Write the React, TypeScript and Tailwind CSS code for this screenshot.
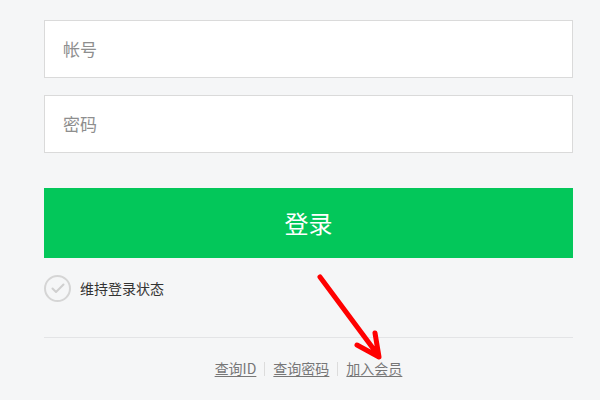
export default function App() {
  return (
    <div
      className="relative h-[400px] w-[600px] overflow-hidden bg-[#f5f6f7]"
      style={{ fontFamily: '"Noto Sans CJK SC", "Liberation Sans", sans-serif' }}
    >
      <div className="ml-[44px] w-[529px] pt-[20px]">
        <div className="flex h-[58px] items-center border border-[#dadada] bg-white pl-[18px] text-[17px] text-[#8e8e8e]">
          帐号
        </div>
        <div className="mt-[17px] flex h-[58px] items-center border border-[#dadada] bg-white pl-[18px] text-[17px] text-[#8e8e8e]">
          密码
        </div>
        <button className="mt-[35px] flex h-[70px] w-full items-center justify-center bg-[#03c75a] text-[24px] font-normal text-white">
          登录
        </button>
        <div className="mt-[17px] flex items-center">
          <span className="flex h-[27px] w-[27px] items-center justify-center rounded-full border-2 border-[#d5d5d5]">
            <svg width="14" height="11" viewBox="0 0 14 11" fill="none">
              <path d="M1.5 5.5 L5 9 L12.5 1.5" stroke="#cfcfcf" strokeWidth="2" strokeLinecap="round" strokeLinejoin="round" />
            </svg>
          </span>
          <span className="ml-[9px] text-[14px] text-[#333]">维持登录状态</span>
        </div>
        <div className="mt-[35px] border-t border-[#e3e4e6]" />
        <div className="mt-[20px] flex items-center justify-center text-[14px] text-[#777]">
          <a className="underline underline-offset-2">查询ID</a>
          <span className="mx-[8px] h-[14px] w-px bg-[#dcdcdc]" />
          <a className="underline underline-offset-2">查询密码</a>
          <span className="mx-[8px] h-[14px] w-px bg-[#dcdcdc]" />
          <a className="underline underline-offset-2">加入会员</a>
        </div>
      </div>
      <svg className="absolute left-0 top-0" width="600" height="400" viewBox="0 0 600 400" fill="none">
        <path
          d="M320 277 L378 355 M375 333 L379 357 L357 345"
          stroke="#ff0000"
          strokeWidth="5"
          strokeLinecap="round"
          strokeLinejoin="round"
        />
      </svg>
    </div>
  );
}
